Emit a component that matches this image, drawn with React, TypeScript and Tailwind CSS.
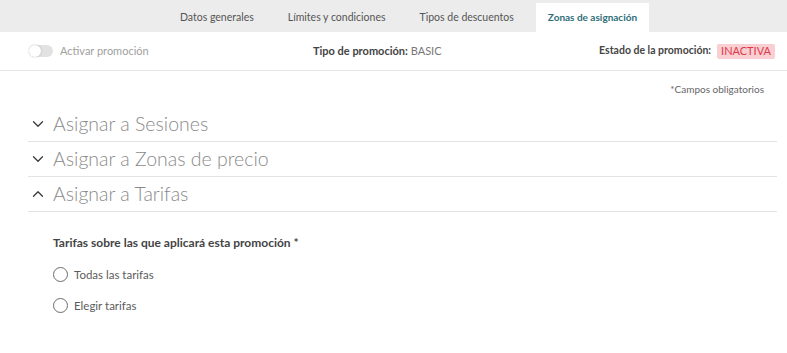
import { ChevronDown, ChevronUp } from 'lucide-react';

const tabs = ['Datos generales', 'Límites y condiciones', 'Tipos de descuentos', 'Zonas de asignación'];

function Section({ title, open }: { title: string; open?: boolean }) {
  return (
    <div className="flex items-center h-[35px] border-b border-[#e3e3e3]">
      <div className="w-[25px] pl-[1px] text-[#3a3a3a]">
        {open ? <ChevronUp size={18} strokeWidth={1.7} /> : <ChevronDown size={18} strokeWidth={1.7} />}
      </div>
      <span className="text-[19.5px] font-light text-[#8a8a8a]">{title}</span>
    </div>
  );
}

function Radio({ label }: { label: string }) {
  return (
    <div className="flex items-center h-[31px]">
      <span className="w-[15px] h-[15px] rounded-full border border-[#6b6b6b] bg-white" />
      <span className="ml-[6px] text-[11.5px] text-[#5c5c5c]">{label}</span>
    </div>
  );
}

export default function App() {
  return (
    <div className="w-[787px] h-[353px] bg-white font-['Lato',sans-serif] overflow-hidden">
      {/* pestañas */}
      <div className="h-[32px] bg-[#ececec] flex items-end pl-[163px]">
        {tabs.map((t, i) =>
          i === 3 ? (
            <div
              key={t}
              className="h-[29px] ml-[5px] px-[12px] bg-white flex items-center text-[10px] font-bold text-[#2f6f78]"
            >
              {t}
            </div>
          ) : (
            <div key={t} className="h-[29px] px-[17px] flex items-center text-[10.5px] text-[#555]">
              {t}
            </div>
          )
        )}
      </div>

      {/* estado */}
      <div className="h-[39px] flex items-center pl-[29px] pr-[12px] border-b border-[#e6e6e6] text-[11px]">
        <div className="w-[284px] flex items-center">
          <span className="relative w-[24px] h-[12px] rounded-full bg-[#e2e2e2]">
            <span className="absolute left-0 top-0 w-[12px] h-[12px] rounded-full bg-white shadow-[0_0_2px_rgba(0,0,0,0.25)]" />
          </span>
          <span className="ml-[7px] text-[#a0a0a0]">Activar promoción</span>
        </div>
        <div className="text-[#444]">
          <span className="font-bold">Tipo de promoción:</span> <span className="text-[#777]">BASIC</span>
        </div>
        <div className="flex-1" />
        <div className="flex items-center">
          <span className="font-bold text-[10.5px] text-[#444]">Estado de la promoción:</span>
          <span className="ml-[6px] px-[4px] h-[15px] flex items-center bg-[#f9cfd2] text-[#e0384a] text-[11px] rounded-[2px]">
            INACTIVA
          </span>
        </div>
      </div>

      <div className="flex justify-end pr-[23px] pt-[11px] text-[10px] text-[#666]">*Campos obligatorios</div>

      <div className="mx-[28px] mt-[10px] mr-[10px]">
        <Section title="Asignar a Sesiones" />
        <Section title="Asignar a Zonas de precio" />
        <Section title="Asignar a Tarifas" open />
      </div>

      <div className="pl-[53px] pt-[22px]">
        <div className="text-[12px] font-bold text-[#444]">Tarifas sobre las que aplicará esta promoción *</div>
        <div className="mt-[7px]">
          <Radio label="Todas las tarifas" />
          <Radio label="Elegir tarifas" />
        </div>
      </div>
    </div>
  );
}
